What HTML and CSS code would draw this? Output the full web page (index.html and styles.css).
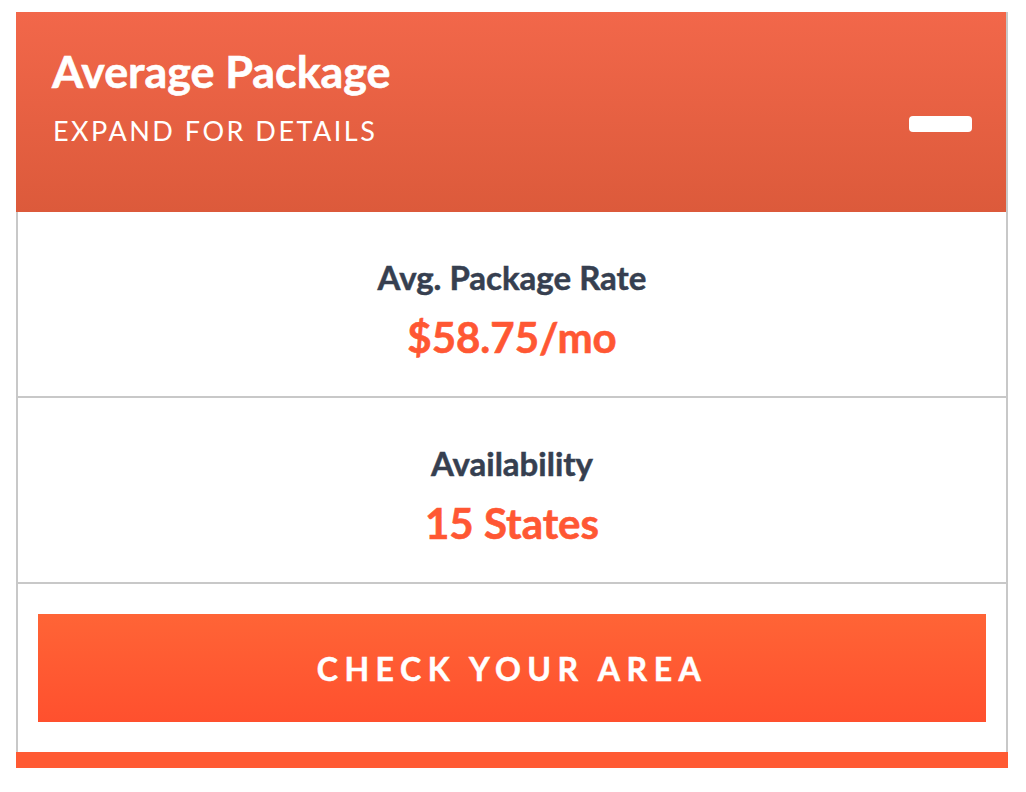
FILE: index.html
```html
<!DOCTYPE html>
<html lang="en">
<head>
<meta charset="utf-8">
<title>Average Package</title>
<link rel="stylesheet" href="styles.css">
</head>
<body>
<div class="card">
  <div class="card-header">
    <div class="header-text">
      <h2 class="title">Average Package</h2>
      <p class="subtitle">EXPAND FOR DETAILS</p>
    </div>
    <span class="toggle" aria-label="Collapse"></span>
  </div>
  <div class="stat">
    <div class="stat-label">Avg. Package Rate</div>
    <div class="stat-value">$58.75/mo</div>
  </div>
  <div class="stat">
    <div class="stat-label">Availability</div>
    <div class="stat-value">15 States</div>
  </div>
  <div class="cta-wrap">
    <a class="cta" href="#">CHECK YOUR AREA</a>
  </div>
  <div class="card-footer"></div>
</div>
</body>
</html>
```
FILE: styles.css
```css
* { box-sizing: border-box; }
body {
  margin: 0;
  background: #ffffff;
  font-family: Lato, "Open Sans", "Liberation Sans", sans-serif;
}
.card {
  margin: 12px 0 0 16px;
  width: 992px;
  border-left: 2px solid #c8c8c8;
  border-right: 2px solid #c8c8c8;
  display: flex;
  flex-direction: column;
}
.card-header {
  margin-left: -2px;
  height: 200px;
  background: linear-gradient(to bottom, #f2674a, #dc5a3b);
  display: flex;
  justify-content: space-between;
  align-items: flex-start;
  padding: 0 34px 0 36px;
}
.title {
  margin: 0;
  padding-top: 35px;
  color: #ffffff;
  font-weight: 700;
  font-size: 44.8px;
  line-height: 48px;
  -webkit-text-stroke: 0.6px #ffffff;
}
.subtitle {
  margin: 20px 0 0 1px;
  color: #ffffff;
  font-weight: 400;
  font-size: 27px;
  line-height: 32px;
  letter-spacing: 2.5px;
}
.toggle {
  display: block;
  margin-top: 104px;
  width: 63px;
  height: 16px;
  border-radius: 4px;
  background: #ffffff;
}
.stat {
  height: 186px;
  border-bottom: 2px solid #c8c8c8;
  display: flex;
  flex-direction: column;
  align-items: center;
  padding-top: 45px;
}
.stat-label {
  color: #363f50;
  font-weight: 700;
  font-size: 33px;
  line-height: 40px;
  -webkit-text-stroke: 0.5px #363f50;
}
.stat-value {
  margin-top: 18px;
  color: #ff5733;
  font-weight: 700;
  font-size: 42px;
  line-height: 44px;
  -webkit-text-stroke: 0.6px #ff5733;
}
.cta-wrap {
  padding: 30px 20px;
}
.cta {
  display: flex;
  align-items: center;
  justify-content: center;
  height: 108px;
  background: linear-gradient(to bottom, #ff6436, #ff502e);
  color: #ffffff;
  text-decoration: none;
  font-weight: 700;
  font-size: 32px;
  letter-spacing: 6.5px;
  -webkit-text-stroke: 0.5px #ffffff;
}
.card-footer {
  margin: 0 -2px;
  height: 16px;
  background: #ff5a33;
}
```
